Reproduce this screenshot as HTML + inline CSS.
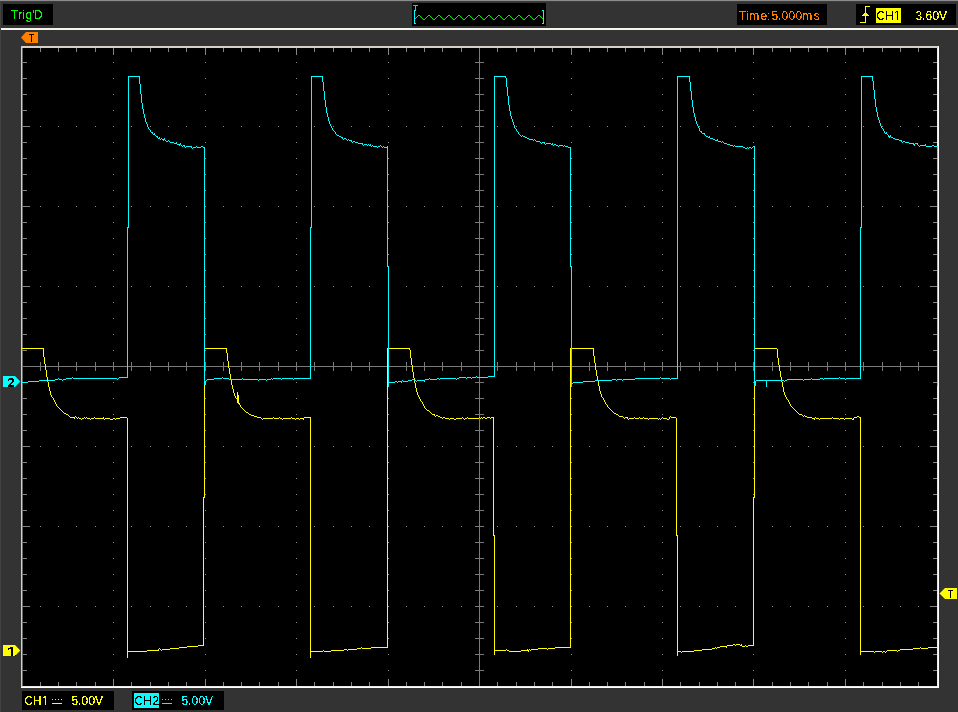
<!DOCTYPE html>
<html><head><meta charset="utf-8"><title>Oscilloscope</title>
<style>
html,body{margin:0;padding:0;}
body{width:958px;height:712px;background:#333333;position:relative;overflow:hidden;font-family:"Liberation Sans",sans-serif;font-size:12px;line-height:14px;}
.box{position:absolute;background:#000;}
.t{position:absolute;white-space:pre;letter-spacing:0;will-change:transform;filter:url(#crisp);}
.plot{position:absolute;left:0;top:0;}
.ov{position:absolute;left:0;top:0;}
.edge-t{position:absolute;left:0;top:0;width:958px;height:1px;background:#8c8c8c;}
.edge-t2{position:absolute;left:0;top:1px;width:958px;height:1px;background:#3c3c3c;}
.edge-l{position:absolute;left:0;top:1px;width:1px;height:711px;background:#424242;}
.sep{position:absolute;left:1px;top:28px;width:957px;height:2px;background:#f6f4ef;}
</style></head><body>
<svg width="0" height="0" style="position:absolute"><defs><filter id="crisp" filterUnits="userSpaceOnUse" x="0" y="0" width="958" height="712" color-interpolation-filters="sRGB"><feComponentTransfer><feFuncA type="discrete" tableValues="0 0 0 0 0 0 0 0 0 1 1 1 1 1 1 1 1 1 1 1"/></feComponentTransfer></filter></defs></svg>
<div class="edge-t"></div><div class="edge-t2"></div><div class="edge-l"></div>
<div class="sep"></div>
<div class="box" style="left:3px;top:4px;width:50px;height:21px;"></div>
<div class="box" style="left:412px;top:3px;width:134px;height:23px;"></div>
<div class="box" style="left:737px;top:4px;width:90px;height:21px;"></div>
<div class="box" style="left:856px;top:4px;width:100px;height:21px;"></div>
<div class="box" style="left:22px;top:691px;width:92px;height:19px;"></div>
<div class="box" style="left:132px;top:691px;width:92px;height:19px;"></div>
<div class="box" style="left:876px;top:8px;width:25px;height:15px;background:#ffff00;"></div>
<div class="box" style="left:134px;top:693px;width:25px;height:15px;background:#00ffff;"></div>
<svg class="plot" width="958" height="712" viewBox="0 0 958 712" shape-rendering="crispEdges">
<rect x="21" y="46" width="918" height="642" fill="#d4d0c8"/>
<rect x="22" y="48" width="1" height="638" fill="#6b6965"/>
<rect x="938" y="46" width="1" height="642" fill="#ffffff"/>
<rect x="21" y="687" width="918" height="1" fill="#ffffff"/>
<rect x="937" y="48" width="1" height="639" fill="#ecebe8"/>
<rect x="23" y="686" width="915" height="1" fill="#ecebe8"/>
<rect x="23" y="48" width="914" height="638" fill="#000"/>
<path d="M23 62.5H27M933 62.5H937M23 78.5H27M933 78.5H937M23 94.5H27M933 94.5H937M23 110.5H27M933 110.5H937M23 126.5H30M930 126.5H937M23 142.5H27M933 142.5H937M23 158.5H27M933 158.5H937M23 174.5H27M933 174.5H937M23 190.5H27M933 190.5H937M23 206.5H30M930 206.5H937M23 222.5H27M933 222.5H937M23 238.5H27M933 238.5H937M23 254.5H27M933 254.5H937M23 270.5H27M933 270.5H937M23 286.5H30M930 286.5H937M23 302.5H27M933 302.5H937M23 318.5H27M933 318.5H937M23 334.5H27M933 334.5H937M23 350.5H27M933 350.5H937M23 366.5H30M930 366.5H937M23 382.5H27M933 382.5H937M23 398.5H27M933 398.5H937M23 414.5H27M933 414.5H937M23 430.5H27M933 430.5H937M23 446.5H30M930 446.5H937M23 462.5H27M933 462.5H937M23 478.5H27M933 478.5H937M23 494.5H27M933 494.5H937M23 510.5H27M933 510.5H937M23 526.5H30M930 526.5H937M23 542.5H27M933 542.5H937M23 558.5H27M933 558.5H937M23 574.5H27M933 574.5H937M23 590.5H27M933 590.5H937M23 606.5H30M930 606.5H937M23 622.5H27M933 622.5H937M23 638.5H27M933 638.5H937M23 654.5H27M933 654.5H937M23 670.5H27M933 670.5H937M40.5 48V52M40.5 682V686M58.5 48V52M58.5 682V686M76.5 48V52M76.5 682V686M95.5 48V52M95.5 682V686M113.5 48V55M113.5 679V686M131.5 48V52M131.5 682V686M150.5 48V52M150.5 682V686M168.5 48V52M168.5 682V686M186.5 48V52M186.5 682V686M205.5 48V55M205.5 679V686M223.5 48V52M223.5 682V686M241.5 48V52M241.5 682V686M259.5 48V52M259.5 682V686M278.5 48V52M278.5 682V686M296.5 48V55M296.5 679V686M314.5 48V52M314.5 682V686M333.5 48V52M333.5 682V686M351.5 48V52M351.5 682V686M369.5 48V52M369.5 682V686M388.5 48V55M388.5 679V686M406.5 48V52M406.5 682V686M424.5 48V52M424.5 682V686M442.5 48V52M442.5 682V686M461.5 48V52M461.5 682V686M479.5 48V55M479.5 679V686M497.5 48V52M497.5 682V686M516.5 48V52M516.5 682V686M534.5 48V52M534.5 682V686M552.5 48V52M552.5 682V686M571.5 48V55M571.5 679V686M589.5 48V52M589.5 682V686M607.5 48V52M607.5 682V686M625.5 48V52M625.5 682V686M644.5 48V52M644.5 682V686M662.5 48V55M662.5 679V686M680.5 48V52M680.5 682V686M699.5 48V52M699.5 682V686M717.5 48V52M717.5 682V686M735.5 48V52M735.5 682V686M753.5 48V55M753.5 679V686M772.5 48V52M772.5 682V686M790.5 48V52M790.5 682V686M808.5 48V52M808.5 682V686M827.5 48V52M827.5 682V686M845.5 48V55M845.5 679V686M863.5 48V52M863.5 682V686M882.5 48V52M882.5 682V686M900.5 48V52M900.5 682V686M918.5 48V52M918.5 682V686" stroke="#858585" stroke-width="1" fill="none"/>
<path d="M40 126.5h1M58 126.5h1M76 126.5h1M95 126.5h1M113 126.5h1M131 126.5h1M150 126.5h1M168 126.5h1M186 126.5h1M205 126.5h1M223 126.5h1M241 126.5h1M259 126.5h1M278 126.5h1M296 126.5h1M314 126.5h1M333 126.5h1M351 126.5h1M369 126.5h1M388 126.5h1M406 126.5h1M424 126.5h1M442 126.5h1M461 126.5h1M479 126.5h1M497 126.5h1M516 126.5h1M534 126.5h1M552 126.5h1M571 126.5h1M589 126.5h1M607 126.5h1M625 126.5h1M644 126.5h1M662 126.5h1M680 126.5h1M699 126.5h1M717 126.5h1M735 126.5h1M753 126.5h1M772 126.5h1M790 126.5h1M808 126.5h1M827 126.5h1M845 126.5h1M863 126.5h1M882 126.5h1M900 126.5h1M918 126.5h1M40 206.5h1M58 206.5h1M76 206.5h1M95 206.5h1M113 206.5h1M131 206.5h1M150 206.5h1M168 206.5h1M186 206.5h1M205 206.5h1M223 206.5h1M241 206.5h1M259 206.5h1M278 206.5h1M296 206.5h1M314 206.5h1M333 206.5h1M351 206.5h1M369 206.5h1M388 206.5h1M406 206.5h1M424 206.5h1M442 206.5h1M461 206.5h1M479 206.5h1M497 206.5h1M516 206.5h1M534 206.5h1M552 206.5h1M571 206.5h1M589 206.5h1M607 206.5h1M625 206.5h1M644 206.5h1M662 206.5h1M680 206.5h1M699 206.5h1M717 206.5h1M735 206.5h1M753 206.5h1M772 206.5h1M790 206.5h1M808 206.5h1M827 206.5h1M845 206.5h1M863 206.5h1M882 206.5h1M900 206.5h1M918 206.5h1M40 286.5h1M58 286.5h1M76 286.5h1M95 286.5h1M113 286.5h1M131 286.5h1M150 286.5h1M168 286.5h1M186 286.5h1M205 286.5h1M223 286.5h1M241 286.5h1M259 286.5h1M278 286.5h1M296 286.5h1M314 286.5h1M333 286.5h1M351 286.5h1M369 286.5h1M388 286.5h1M406 286.5h1M424 286.5h1M442 286.5h1M461 286.5h1M479 286.5h1M497 286.5h1M516 286.5h1M534 286.5h1M552 286.5h1M571 286.5h1M589 286.5h1M607 286.5h1M625 286.5h1M644 286.5h1M662 286.5h1M680 286.5h1M699 286.5h1M717 286.5h1M735 286.5h1M753 286.5h1M772 286.5h1M790 286.5h1M808 286.5h1M827 286.5h1M845 286.5h1M863 286.5h1M882 286.5h1M900 286.5h1M918 286.5h1M40 446.5h1M58 446.5h1M76 446.5h1M95 446.5h1M113 446.5h1M131 446.5h1M150 446.5h1M168 446.5h1M186 446.5h1M205 446.5h1M223 446.5h1M241 446.5h1M259 446.5h1M278 446.5h1M296 446.5h1M314 446.5h1M333 446.5h1M351 446.5h1M369 446.5h1M388 446.5h1M406 446.5h1M424 446.5h1M442 446.5h1M461 446.5h1M479 446.5h1M497 446.5h1M516 446.5h1M534 446.5h1M552 446.5h1M571 446.5h1M589 446.5h1M607 446.5h1M625 446.5h1M644 446.5h1M662 446.5h1M680 446.5h1M699 446.5h1M717 446.5h1M735 446.5h1M753 446.5h1M772 446.5h1M790 446.5h1M808 446.5h1M827 446.5h1M845 446.5h1M863 446.5h1M882 446.5h1M900 446.5h1M918 446.5h1M40 526.5h1M58 526.5h1M76 526.5h1M95 526.5h1M113 526.5h1M131 526.5h1M150 526.5h1M168 526.5h1M186 526.5h1M205 526.5h1M223 526.5h1M241 526.5h1M259 526.5h1M278 526.5h1M296 526.5h1M314 526.5h1M333 526.5h1M351 526.5h1M369 526.5h1M388 526.5h1M406 526.5h1M424 526.5h1M442 526.5h1M461 526.5h1M479 526.5h1M497 526.5h1M516 526.5h1M534 526.5h1M552 526.5h1M571 526.5h1M589 526.5h1M607 526.5h1M625 526.5h1M644 526.5h1M662 526.5h1M680 526.5h1M699 526.5h1M717 526.5h1M735 526.5h1M753 526.5h1M772 526.5h1M790 526.5h1M808 526.5h1M827 526.5h1M845 526.5h1M863 526.5h1M882 526.5h1M900 526.5h1M918 526.5h1M40 606.5h1M58 606.5h1M76 606.5h1M95 606.5h1M113 606.5h1M131 606.5h1M150 606.5h1M168 606.5h1M186 606.5h1M205 606.5h1M223 606.5h1M241 606.5h1M259 606.5h1M278 606.5h1M296 606.5h1M314 606.5h1M333 606.5h1M351 606.5h1M369 606.5h1M388 606.5h1M406 606.5h1M424 606.5h1M442 606.5h1M461 606.5h1M479 606.5h1M497 606.5h1M516 606.5h1M534 606.5h1M552 606.5h1M571 606.5h1M589 606.5h1M607 606.5h1M625 606.5h1M644 606.5h1M662 606.5h1M680 606.5h1M699 606.5h1M717 606.5h1M735 606.5h1M753 606.5h1M772 606.5h1M790 606.5h1M808 606.5h1M827 606.5h1M845 606.5h1M863 606.5h1M882 606.5h1M900 606.5h1M918 606.5h1M113 62.5h1M113 78.5h1M113 94.5h1M113 110.5h1M113 142.5h1M113 158.5h1M113 174.5h1M113 190.5h1M113 222.5h1M113 238.5h1M113 254.5h1M113 270.5h1M113 302.5h1M113 318.5h1M113 334.5h1M113 350.5h1M113 382.5h1M113 398.5h1M113 414.5h1M113 430.5h1M113 462.5h1M113 478.5h1M113 494.5h1M113 510.5h1M113 542.5h1M113 558.5h1M113 574.5h1M113 590.5h1M113 622.5h1M113 638.5h1M113 654.5h1M113 670.5h1M205 62.5h1M205 78.5h1M205 94.5h1M205 110.5h1M205 142.5h1M205 158.5h1M205 174.5h1M205 190.5h1M205 222.5h1M205 238.5h1M205 254.5h1M205 270.5h1M205 302.5h1M205 318.5h1M205 334.5h1M205 350.5h1M205 382.5h1M205 398.5h1M205 414.5h1M205 430.5h1M205 462.5h1M205 478.5h1M205 494.5h1M205 510.5h1M205 542.5h1M205 558.5h1M205 574.5h1M205 590.5h1M205 622.5h1M205 638.5h1M205 654.5h1M205 670.5h1M296 62.5h1M296 78.5h1M296 94.5h1M296 110.5h1M296 142.5h1M296 158.5h1M296 174.5h1M296 190.5h1M296 222.5h1M296 238.5h1M296 254.5h1M296 270.5h1M296 302.5h1M296 318.5h1M296 334.5h1M296 350.5h1M296 382.5h1M296 398.5h1M296 414.5h1M296 430.5h1M296 462.5h1M296 478.5h1M296 494.5h1M296 510.5h1M296 542.5h1M296 558.5h1M296 574.5h1M296 590.5h1M296 622.5h1M296 638.5h1M296 654.5h1M296 670.5h1M388 62.5h1M388 78.5h1M388 94.5h1M388 110.5h1M388 142.5h1M388 158.5h1M388 174.5h1M388 190.5h1M388 222.5h1M388 238.5h1M388 254.5h1M388 270.5h1M388 302.5h1M388 318.5h1M388 334.5h1M388 350.5h1M388 382.5h1M388 398.5h1M388 414.5h1M388 430.5h1M388 462.5h1M388 478.5h1M388 494.5h1M388 510.5h1M388 542.5h1M388 558.5h1M388 574.5h1M388 590.5h1M388 622.5h1M388 638.5h1M388 654.5h1M388 670.5h1M571 62.5h1M571 78.5h1M571 94.5h1M571 110.5h1M571 142.5h1M571 158.5h1M571 174.5h1M571 190.5h1M571 222.5h1M571 238.5h1M571 254.5h1M571 270.5h1M571 302.5h1M571 318.5h1M571 334.5h1M571 350.5h1M571 382.5h1M571 398.5h1M571 414.5h1M571 430.5h1M571 462.5h1M571 478.5h1M571 494.5h1M571 510.5h1M571 542.5h1M571 558.5h1M571 574.5h1M571 590.5h1M571 622.5h1M571 638.5h1M571 654.5h1M571 670.5h1M662 62.5h1M662 78.5h1M662 94.5h1M662 110.5h1M662 142.5h1M662 158.5h1M662 174.5h1M662 190.5h1M662 222.5h1M662 238.5h1M662 254.5h1M662 270.5h1M662 302.5h1M662 318.5h1M662 334.5h1M662 350.5h1M662 382.5h1M662 398.5h1M662 414.5h1M662 430.5h1M662 462.5h1M662 478.5h1M662 494.5h1M662 510.5h1M662 542.5h1M662 558.5h1M662 574.5h1M662 590.5h1M662 622.5h1M662 638.5h1M662 654.5h1M662 670.5h1M753 62.5h1M753 78.5h1M753 94.5h1M753 110.5h1M753 142.5h1M753 158.5h1M753 174.5h1M753 190.5h1M753 222.5h1M753 238.5h1M753 254.5h1M753 270.5h1M753 302.5h1M753 318.5h1M753 334.5h1M753 350.5h1M753 382.5h1M753 398.5h1M753 414.5h1M753 430.5h1M753 462.5h1M753 478.5h1M753 494.5h1M753 510.5h1M753 542.5h1M753 558.5h1M753 574.5h1M753 590.5h1M753 622.5h1M753 638.5h1M753 654.5h1M753 670.5h1M845 62.5h1M845 78.5h1M845 94.5h1M845 110.5h1M845 142.5h1M845 158.5h1M845 174.5h1M845 190.5h1M845 222.5h1M845 238.5h1M845 254.5h1M845 270.5h1M845 302.5h1M845 318.5h1M845 334.5h1M845 350.5h1M845 382.5h1M845 398.5h1M845 414.5h1M845 430.5h1M845 462.5h1M845 478.5h1M845 494.5h1M845 510.5h1M845 542.5h1M845 558.5h1M845 574.5h1M845 590.5h1M845 622.5h1M845 638.5h1M845 654.5h1M845 670.5h1" stroke="#8a8a8a" stroke-width="1" fill="none"/>
<path d="M23 366.5H937M475 62.5H484M475 78.5H484M475 94.5H484M475 110.5H484M475 126.5H484M475 142.5H484M475 158.5H484M475 174.5H484M475 190.5H484M475 206.5H484M475 222.5H484M475 238.5H484M475 254.5H484M475 270.5H484M475 286.5H484M475 302.5H484M475 318.5H484M475 334.5H484M475 350.5H484M475 382.5H484M475 398.5H484M475 414.5H484M475 430.5H484M475 446.5H484M475 462.5H484M475 478.5H484M475 494.5H484M475 510.5H484M475 526.5H484M475 542.5H484M475 558.5H484M475 574.5H484M475 590.5H484M475 606.5H484M475 622.5H484M475 638.5H484M475 654.5H484M475 670.5H484M479.5 48V686M40.5 362V371M58.5 362V371M76.5 362V371M95.5 362V371M113.5 362V371M131.5 362V371M150.5 362V371M168.5 362V371M186.5 362V371M205.5 362V371M223.5 362V371M241.5 362V371M259.5 362V371M278.5 362V371M296.5 362V371M314.5 362V371M333.5 362V371M351.5 362V371M369.5 362V371M388.5 362V371M406.5 362V371M424.5 362V371M442.5 362V371M461.5 362V371M497.5 362V371M516.5 362V371M534.5 362V371M552.5 362V371M571.5 362V371M589.5 362V371M607.5 362V371M625.5 362V371M644.5 362V371M662.5 362V371M680.5 362V371M699.5 362V371M717.5 362V371M735.5 362V371M753.5 362V371M772.5 362V371M790.5 362V371M808.5 362V371M827.5 362V371M845.5 362V371M863.5 362V371M882.5 362V371M900.5 362V371M918.5 362V371" stroke="#7a7a7a" stroke-width="1" fill="none"/>
<path d="M22.5 348V349M23.5 348V349M24.5 348V349M25.5 348V349M26.5 348V349M27.5 348V349M28.5 348V349M29.5 348V349M30.5 348V349M31.5 348V349M32.5 348V349M33.5 348V349M34.5 348V349M35.5 348V349M36.5 348V349M37.5 348V349M38.5 348V349M39.5 348V349M40.5 348V349M41.5 348V349M42.5 348V349M43.5 348V357M44.5 357V364M45.5 364V370M46.5 370V377M47.5 377V382M48.5 382V387M49.5 387V391M50.5 391V395M51.5 395V397M52.5 397V398M53.5 398V400M54.5 400V402M55.5 402V404M56.5 404V406M57.5 406V407M58.5 407V408M59.5 408V409M60.5 409V410M61.5 410V411M62.5 411V412M63.5 412V413M64.5 413V414M65.5 413V414M66.5 414V415M67.5 414V415M68.5 415V416M69.5 416V417M70.5 417V418M71.5 417V418M72.5 417V418M73.5 417V418M74.5 417V419M75.5 416V417M76.5 417V418M77.5 418V419M78.5 417V418M79.5 418V419M80.5 418V419M81.5 419V420M82.5 418V419M83.5 418V419M84.5 417V418M85.5 418V419M86.5 417V418M87.5 418V419M88.5 418V419M89.5 418V419M90.5 419V420M91.5 418V419M92.5 418V419M93.5 418V419M94.5 417V418M95.5 418V419M96.5 418V419M97.5 418V419M98.5 418V419M99.5 418V419M100.5 418V419M101.5 418V419M102.5 418V419M103.5 417V419M104.5 419V420M105.5 418V419M106.5 418V419M107.5 418V419M108.5 418V419M109.5 418V419M110.5 419V420M111.5 419V420M112.5 419V420M113.5 418V419M114.5 418V419M115.5 419V420M116.5 418V419M117.5 418V419M118.5 418V419M119.5 418V419M120.5 417V418M121.5 417V418M122.5 417V418M123.5 417V418M124.5 417V418M125.5 417V418M126.5 417V418M127.5 418V652M128.5 651V652M129.5 651V652M130.5 651V652M131.5 651V652M132.5 651V652M133.5 651V652M134.5 651V652M135.5 651V652M136.5 651V652M137.5 651V652M138.5 651V652M139.5 651V652M140.5 651V652M141.5 651V652M142.5 651V652M143.5 651V652M144.5 651V652M145.5 651V652M146.5 651V652M147.5 650V651M148.5 650V651M149.5 650V651M150.5 650V651M151.5 650V651M152.5 650V651M153.5 650V651M154.5 650V651M155.5 650V651M156.5 650V651M157.5 650V651M158.5 649V651M159.5 648V649M160.5 649V650M161.5 650V651M162.5 649V650M163.5 649V650M164.5 649V650M165.5 649V650M166.5 649V650M167.5 649V650M168.5 649V650M169.5 649V650M170.5 648V649M171.5 648V649M172.5 648V649M173.5 648V649M174.5 648V649M175.5 648V649M176.5 648V649M177.5 648V649M178.5 648V649M179.5 647V648M180.5 647V648M181.5 647V648M182.5 647V648M183.5 647V648M184.5 647V648M185.5 647V648M186.5 647V648M187.5 646V647M188.5 646V647M189.5 646V647M190.5 646V647M191.5 646V647M192.5 646V647M193.5 646V647M194.5 646V647M195.5 646V647M196.5 646V647M197.5 646V647M198.5 645V646M199.5 645V646M200.5 645V646M201.5 645V646M202.5 645V646M203.5 497V646M204.5 348V498M205.5 348V349M206.5 348V349M207.5 348V349M208.5 348V349M209.5 348V349M210.5 348V349M211.5 348V349M212.5 348V349M213.5 348V349M214.5 348V349M215.5 348V349M216.5 348V349M217.5 348V349M218.5 348V349M219.5 348V349M220.5 348V349M221.5 348V349M222.5 348V349M223.5 348V349M224.5 348V349M225.5 348V349M226.5 348V353M227.5 353V361M228.5 361V368M229.5 368V374M230.5 374V380M231.5 380V385M232.5 385V389M233.5 389V393M234.5 393V396M235.5 396V398M236.5 398V399M237.5 399V401M238.5 401V403M239.5 403V405M240.5 405V407M241.5 407V408M242.5 408V409M243.5 409V410M244.5 410V411M245.5 411V412M246.5 412V413M247.5 412V413M248.5 413V414M249.5 414V415M250.5 414V415M251.5 415V416M252.5 415V416M253.5 415V416M254.5 416V417M255.5 416V417M256.5 416V417M257.5 417V418M258.5 417V418M259.5 417V418M260.5 417V418M261.5 418V419M262.5 419V420M263.5 418V419M264.5 418V419M265.5 418V419M266.5 418V419M267.5 418V419M268.5 418V419M269.5 418V419M270.5 418V419M271.5 418V419M272.5 418V419M273.5 417V418M274.5 418V419M275.5 418V419M276.5 418V419M277.5 418V419M278.5 418V419M279.5 417V418M280.5 418V419M281.5 418V419M282.5 419V420M283.5 418V419M284.5 418V419M285.5 418V419M286.5 418V419M287.5 418V419M288.5 418V419M289.5 418V419M290.5 418V419M291.5 417V418M292.5 418V419M293.5 418V419M294.5 418V419M295.5 419V420M296.5 418V419M297.5 418V419M298.5 418V419M299.5 419V420M300.5 418V419M301.5 418V419M302.5 418V419M303.5 418V420M304.5 417V418M305.5 417V418M306.5 417V418M307.5 417V418M308.5 417V418M309.5 417V418M310.5 417V652M311.5 651V652M312.5 651V652M313.5 651V652M314.5 651V652M315.5 651V652M316.5 651V652M317.5 651V652M318.5 651V652M319.5 651V652M320.5 651V652M321.5 651V652M322.5 651V652M323.5 650V651M324.5 651V652M325.5 651V652M326.5 651V652M327.5 651V652M328.5 651V652M329.5 651V652M330.5 651V652M331.5 650V651M332.5 650V651M333.5 650V651M334.5 650V651M335.5 650V651M336.5 650V651M337.5 650V651M338.5 650V651M339.5 650V651M340.5 650V651M341.5 650V651M342.5 650V651M343.5 650V651M344.5 649V650M345.5 649V650M346.5 649V650M347.5 650V651M348.5 649V650M349.5 649V650M350.5 649V650M351.5 649V650M352.5 649V650M353.5 649V650M354.5 649V650M355.5 649V650M356.5 649V650M357.5 648V649M358.5 648V649M359.5 648V649M360.5 648V649M361.5 647V648M362.5 648V649M363.5 648V649M364.5 648V649M365.5 648V649M366.5 648V649M367.5 648V649M368.5 648V649M369.5 648V649M370.5 648V649M371.5 647V648M372.5 647V648M373.5 647V648M374.5 647V648M375.5 647V648M376.5 647V648M377.5 647V648M378.5 647V648M379.5 647V648M380.5 647V648M381.5 647V648M382.5 647V648M383.5 647V648M384.5 647V648M385.5 647V648M386.5 647V648M387.5 348V648M388.5 348V349M389.5 348V349M390.5 348V349M391.5 348V349M392.5 348V349M393.5 348V349M394.5 348V349M395.5 348V349M396.5 348V349M397.5 348V349M398.5 348V349M399.5 348V349M400.5 348V349M401.5 348V349M402.5 348V349M403.5 348V349M404.5 348V349M405.5 348V349M406.5 348V349M407.5 348V349M408.5 348V349M409.5 348V350M410.5 350V358M411.5 358V365M412.5 365V372M413.5 372V378M414.5 378V383M415.5 383V388M416.5 388V392M417.5 392V395M418.5 395V397M419.5 397V399M420.5 399V401M421.5 401V402M422.5 402V404M423.5 404V406M424.5 406V408M425.5 408V409M426.5 409V410M427.5 410V411M428.5 410V411M429.5 411V412M430.5 412V413M431.5 413V414M432.5 414V415M433.5 414V415M434.5 414V416M435.5 416V417M436.5 415V416M437.5 415V416M438.5 416V417M439.5 416V417M440.5 417V418M441.5 417V418M442.5 418V419M443.5 417V418M444.5 417V418M445.5 418V419M446.5 418V419M447.5 418V419M448.5 418V419M449.5 419V420M450.5 418V419M451.5 418V419M452.5 418V419M453.5 418V419M454.5 419V420M455.5 419V420M456.5 418V419M457.5 418V419M458.5 418V419M459.5 418V419M460.5 418V419M461.5 418V419M462.5 417V418M463.5 418V419M464.5 419V420M465.5 418V419M466.5 418V419M467.5 417V418M468.5 418V419M469.5 418V419M470.5 418V419M471.5 418V419M472.5 418V419M473.5 418V419M474.5 418V419M475.5 418V419M476.5 418V419M477.5 418V419M478.5 418V419M479.5 417V418M480.5 418V419M481.5 417V418M482.5 418V419M483.5 417V418M484.5 417V418M485.5 418V419M486.5 418V419M487.5 417V418M488.5 417V418M489.5 417V418M490.5 418V419M491.5 417V418M492.5 417V418M493.5 417V536M494.5 535V651M495.5 650V651M496.5 650V651M497.5 650V651M498.5 650V651M499.5 650V651M500.5 650V651M501.5 650V651M502.5 650V651M503.5 650V651M504.5 650V651M505.5 650V651M506.5 649V650M507.5 650V651M508.5 650V651M509.5 651V652M510.5 651V652M511.5 651V652M512.5 651V652M513.5 651V652M514.5 651V652M515.5 651V652M516.5 651V652M517.5 651V652M518.5 651V652M519.5 651V652M520.5 651V652M521.5 650V651M522.5 650V651M523.5 650V651M524.5 650V651M525.5 650V651M526.5 650V651M527.5 649V651M528.5 650V652M529.5 649V650M530.5 650V651M531.5 649V650M532.5 649V650M533.5 649V650M534.5 649V650M535.5 649V650M536.5 649V650M537.5 649V650M538.5 648V649M539.5 648V649M540.5 648V649M541.5 648V649M542.5 648V649M543.5 648V649M544.5 648V649M545.5 648V649M546.5 648V649M547.5 649V650M548.5 648V649M549.5 648V649M550.5 648V649M551.5 648V649M552.5 648V649M553.5 648V649M554.5 648V649M555.5 647V648M556.5 647V648M557.5 647V648M558.5 647V648M559.5 647V648M560.5 647V648M561.5 647V648M562.5 647V648M563.5 647V648M564.5 647V648M565.5 647V648M566.5 647V648M567.5 647V648M568.5 647V648M569.5 647V648M570.5 348V648M571.5 348V349M572.5 348V349M573.5 348V349M574.5 348V349M575.5 348V349M576.5 348V349M577.5 348V349M578.5 348V349M579.5 348V349M580.5 348V349M581.5 348V349M582.5 348V349M583.5 348V349M584.5 348V349M585.5 348V349M586.5 348V349M587.5 348V349M588.5 348V349M589.5 348V349M590.5 348V349M591.5 348V349M592.5 348V349M593.5 348V356M594.5 356V363M595.5 363V370M596.5 370V376M597.5 376V381M598.5 381V386M599.5 386V391M600.5 391V394M601.5 394V397M602.5 397V398M603.5 398V400M604.5 400V402M605.5 402V404M606.5 404V405M607.5 405V407M608.5 407V408M609.5 408V409M610.5 409V410M611.5 410V411M612.5 411V412M613.5 412V413M614.5 413V414M615.5 413V414M616.5 414V415M617.5 414V415M618.5 415V416M619.5 416V417M620.5 416V417M621.5 416V417M622.5 416V417M623.5 417V418M624.5 418V419M625.5 417V418M626.5 417V418M627.5 417V419M628.5 419V420M629.5 418V419M630.5 418V419M631.5 418V419M632.5 418V419M633.5 418V419M634.5 417V418M635.5 418V419M636.5 418V419M637.5 418V419M638.5 418V419M639.5 417V418M640.5 418V419M641.5 418V419M642.5 418V419M643.5 417V418M644.5 418V419M645.5 418V419M646.5 418V419M647.5 418V419M648.5 419V420M649.5 418V419M650.5 418V419M651.5 418V419M652.5 418V419M653.5 418V419M654.5 418V419M655.5 418V419M656.5 418V419M657.5 418V419M658.5 419V420M659.5 418V419M660.5 419V420M661.5 418V419M662.5 417V418M663.5 418V419M664.5 418V419M665.5 418V419M666.5 418V419M667.5 419V420M668.5 419V420M669.5 417V419M670.5 416V417M671.5 417V418M672.5 417V418M673.5 417V418M674.5 417V418M675.5 417V418M676.5 418V536M677.5 535V652M678.5 651V652M679.5 651V652M680.5 651V652M681.5 652V653M682.5 651V652M683.5 651V652M684.5 651V652M685.5 651V652M686.5 651V652M687.5 651V652M688.5 651V652M689.5 651V652M690.5 651V652M691.5 651V652M692.5 651V652M693.5 651V652M694.5 650V651M695.5 650V651M696.5 650V651M697.5 650V651M698.5 650V651M699.5 650V651M700.5 650V651M701.5 650V651M702.5 649V650M703.5 649V650M704.5 649V650M705.5 649V650M706.5 649V650M707.5 649V650M708.5 649V650M709.5 649V650M710.5 649V650M711.5 649V650M712.5 648V649M713.5 648V649M714.5 648V649M715.5 647V648M716.5 648V649M717.5 647V648M718.5 647V648M719.5 647V648M720.5 646V647M721.5 646V647M722.5 646V647M723.5 646V647M724.5 646V647M725.5 646V647M726.5 646V648M727.5 645V646M728.5 645V646M729.5 645V646M730.5 645V646M731.5 645V646M732.5 645V646M733.5 644V645M734.5 644V645M735.5 645V646M736.5 644V645M737.5 644V645M738.5 644V645M739.5 644V645M740.5 645V646M741.5 644V646M742.5 646V647M743.5 646V647M744.5 646V647M745.5 645V646M746.5 646V647M747.5 646V647M748.5 645V646M749.5 645V646M750.5 645V646M751.5 645V646M752.5 645V646M753.5 497V646M754.5 348V498M755.5 348V349M756.5 348V349M757.5 348V349M758.5 348V349M759.5 348V349M760.5 348V349M761.5 348V349M762.5 348V349M763.5 348V349M764.5 348V349M765.5 348V349M766.5 348V349M767.5 348V349M768.5 348V349M769.5 348V349M770.5 348V349M771.5 348V349M772.5 348V349M773.5 348V349M774.5 348V349M775.5 348V349M776.5 348V349M777.5 349V358M778.5 358V365M779.5 365V371M780.5 371V377M781.5 377V382M782.5 382V387M783.5 387V392M784.5 392V395M785.5 395V397M786.5 397V399M787.5 399V400M788.5 400V402M789.5 402V404M790.5 404V406M791.5 406V407M792.5 407V408M793.5 408V409M794.5 409V410M795.5 410V411M796.5 411V412M797.5 412V413M798.5 413V414M799.5 414V415M800.5 414V415M801.5 414V415M802.5 415V416M803.5 416V417M804.5 415V416M805.5 416V417M806.5 416V417M807.5 417V418M808.5 417V418M809.5 417V418M810.5 417V418M811.5 417V418M812.5 418V419M813.5 418V419M814.5 418V420M815.5 417V418M816.5 418V419M817.5 418V419M818.5 418V419M819.5 419V420M820.5 418V419M821.5 418V419M822.5 418V419M823.5 418V419M824.5 418V419M825.5 418V419M826.5 418V419M827.5 418V419M828.5 418V419M829.5 418V419M830.5 418V419M831.5 418V419M832.5 417V418M833.5 418V419M834.5 418V419M835.5 418V419M836.5 418V419M837.5 418V419M838.5 418V419M839.5 419V420M840.5 418V419M841.5 418V419M842.5 418V419M843.5 418V419M844.5 419V420M845.5 418V419M846.5 418V419M847.5 418V419M848.5 418V419M849.5 418V419M850.5 418V419M851.5 418V419M852.5 419V420M853.5 418V420M854.5 417V418M855.5 417V418M856.5 417V418M857.5 416V417M858.5 416V417M859.5 417V418M860.5 417V652M861.5 651V652M862.5 651V652M863.5 651V652M864.5 651V652M865.5 651V652M866.5 651V652M867.5 651V652M868.5 651V652M869.5 651V652M870.5 651V652M871.5 651V652M872.5 651V652M873.5 651V652M874.5 652V653M875.5 651V652M876.5 651V652M877.5 651V652M878.5 651V652M879.5 651V652M880.5 651V652M881.5 651V652M882.5 652V653M883.5 651V652M884.5 651V652M885.5 652V653M886.5 651V652M887.5 650V651M888.5 650V651M889.5 650V651M890.5 650V651M891.5 650V651M892.5 650V651M893.5 650V651M894.5 650V651M895.5 650V651M896.5 650V651M897.5 651V652M898.5 650V651M899.5 650V651M900.5 649V650M901.5 649V650M902.5 649V650M903.5 649V650M904.5 649V650M905.5 649V650M906.5 649V650M907.5 649V650M908.5 649V650M909.5 649V650M910.5 649V650M911.5 649V650M912.5 649V650M913.5 648V649M914.5 648V649M915.5 648V649M916.5 648V649M917.5 648V649M918.5 648V649M919.5 648V649M920.5 647V648M921.5 648V649M922.5 648V649M923.5 648V649M924.5 648V649M925.5 648V649M926.5 648V649M927.5 648V649M928.5 647V648M929.5 647V648M930.5 647V648M931.5 647V648M932.5 647V648M933.5 647V648M934.5 647V648M935.5 647V648M936.5 647V648M937.5 386V648M127.5 418V658M310.5 417V658M494.5 535V655M677.5 535V656M860.5 417V655M237.5 392V403M238.5 395V404" stroke="#ffff00" stroke-width="1" fill="none"/>
<path d="M22.5 382V383M23.5 382V383M24.5 382V383M25.5 382V383M26.5 382V383M27.5 382V383M28.5 381V382M29.5 381V382M30.5 381V382M31.5 381V382M32.5 381V382M33.5 381V382M34.5 381V382M35.5 381V382M36.5 381V382M37.5 381V382M38.5 381V382M39.5 380V381M40.5 380V381M41.5 380V381M42.5 380V381M43.5 380V381M44.5 380V381M45.5 380V381M46.5 380V381M47.5 381V382M48.5 380V381M49.5 380V381M50.5 380V381M51.5 380V381M52.5 380V381M53.5 380V381M54.5 380V381M55.5 379V380M56.5 379V380M57.5 379V380M58.5 378V379M59.5 379V380M60.5 379V380M61.5 379V380M62.5 380V381M63.5 379V380M64.5 379V380M65.5 379V380M66.5 378V379M67.5 378V379M68.5 378V379M69.5 378V379M70.5 378V379M71.5 378V379M72.5 377V378M73.5 378V379M74.5 378V379M75.5 378V379M76.5 378V379M77.5 378V379M78.5 378V379M79.5 378V379M80.5 378V379M81.5 378V379M82.5 378V379M83.5 378V379M84.5 378V379M85.5 378V379M86.5 378V379M87.5 378V379M88.5 378V379M89.5 378V379M90.5 378V379M91.5 378V379M92.5 378V379M93.5 378V379M94.5 378V379M95.5 378V379M96.5 378V379M97.5 378V379M98.5 378V379M99.5 378V379M100.5 378V379M101.5 378V379M102.5 378V379M103.5 378V379M104.5 378V379M105.5 378V379M106.5 378V379M107.5 378V379M108.5 378V379M109.5 378V379M110.5 378V379M111.5 378V379M112.5 378V379M113.5 378V379M114.5 378V379M115.5 378V379M116.5 378V379M117.5 379V380M118.5 378V379M119.5 377V378M120.5 377V378M121.5 377V378M122.5 377V378M123.5 377V378M124.5 377V378M125.5 377V378M126.5 377V378M127.5 227V378M128.5 76V228M129.5 76V77M130.5 76V77M131.5 76V77M132.5 76V77M133.5 76V77M134.5 76V77M135.5 76V77M136.5 76V77M137.5 76V77M138.5 76V77M139.5 76V84M140.5 84V94M141.5 94V103M142.5 103V109M143.5 109V114M144.5 114V118M145.5 118V122M146.5 122V124M147.5 124V127M148.5 127V129M149.5 129V130M150.5 130V132M151.5 132V133M152.5 132V134M153.5 134V135M154.5 133V135M155.5 135V136M156.5 136V137M157.5 136V138M158.5 138V139M159.5 137V139M160.5 139V140M161.5 138V139M162.5 139V140M163.5 139V141M164.5 138V140M165.5 140V141M166.5 141V142M167.5 141V142M168.5 140V141M169.5 141V142M170.5 142V143M171.5 142V143M172.5 142V143M173.5 142V143M174.5 143V144M175.5 143V144M176.5 142V144M177.5 144V145M178.5 144V145M179.5 144V146M180.5 143V145M181.5 145V146M182.5 146V147M183.5 145V146M184.5 145V147M185.5 147V148M186.5 146V147M187.5 146V147M188.5 146V147M189.5 146V147M190.5 146V147M191.5 146V148M192.5 148V149M193.5 147V148M194.5 147V148M195.5 147V148M196.5 146V147M197.5 147V148M198.5 147V148M199.5 147V148M200.5 147V148M201.5 146V147M202.5 146V147M203.5 147V148M204.5 147V385M205.5 381V385M206.5 380V381M207.5 379V380M208.5 379V380M209.5 379V380M210.5 379V380M211.5 379V380M212.5 379V380M213.5 379V380M214.5 378V379M215.5 378V379M216.5 378V379M217.5 378V379M218.5 378V379M219.5 378V379M220.5 378V379M221.5 378V379M222.5 377V378M223.5 378V379M224.5 378V379M225.5 378V379M226.5 378V379M227.5 378V379M228.5 378V379M229.5 379V380M230.5 379V380M231.5 379V380M232.5 379V380M233.5 379V380M234.5 379V380M235.5 379V380M236.5 379V380M237.5 379V380M238.5 379V380M239.5 379V380M240.5 379V380M241.5 379V380M242.5 378V379M243.5 379V380M244.5 379V380M245.5 379V380M246.5 379V380M247.5 379V380M248.5 379V380M249.5 379V380M250.5 379V380M251.5 379V380M252.5 379V380M253.5 379V380M254.5 379V380M255.5 379V380M256.5 379V380M257.5 379V380M258.5 380V381M259.5 379V380M260.5 379V380M261.5 379V380M262.5 379V380M263.5 379V380M264.5 379V380M265.5 379V380M266.5 380V381M267.5 379V380M268.5 379V380M269.5 379V380M270.5 379V380M271.5 378V379M272.5 379V380M273.5 378V379M274.5 378V379M275.5 378V379M276.5 378V379M277.5 378V379M278.5 378V379M279.5 378V379M280.5 378V379M281.5 379V380M282.5 378V379M283.5 378V379M284.5 378V379M285.5 378V379M286.5 378V379M287.5 378V379M288.5 378V379M289.5 378V379M290.5 378V379M291.5 378V379M292.5 378V379M293.5 379V380M294.5 378V379M295.5 378V379M296.5 378V379M297.5 378V379M298.5 378V379M299.5 378V379M300.5 378V379M301.5 378V379M302.5 378V379M303.5 378V379M304.5 378V379M305.5 378V379M306.5 378V379M307.5 378V379M308.5 378V379M309.5 378V379M310.5 227V379M311.5 76V228M312.5 76V77M313.5 76V77M314.5 76V77M315.5 76V77M316.5 76V77M317.5 76V77M318.5 76V77M319.5 76V77M320.5 76V77M321.5 76V77M322.5 76V82M323.5 82V91M324.5 91V100M325.5 100V107M326.5 107V113M327.5 113V117M328.5 117V121M329.5 121V124M330.5 124V126M331.5 126V128M332.5 128V130M333.5 130V131M334.5 131V132M335.5 132V134M336.5 134V135M337.5 135V136M338.5 135V136M339.5 136V137M340.5 136V137M341.5 137V138M342.5 137V139M343.5 139V140M344.5 138V139M345.5 138V139M346.5 139V140M347.5 140V141M348.5 139V140M349.5 140V141M350.5 140V141M351.5 140V142M352.5 142V143M353.5 141V142M354.5 141V142M355.5 142V143M356.5 142V143M357.5 142V143M358.5 143V144M359.5 143V144M360.5 143V144M361.5 143V144M362.5 143V145M363.5 145V146M364.5 144V145M365.5 144V145M366.5 144V145M367.5 145V146M368.5 144V145M369.5 145V146M370.5 144V146M371.5 146V147M372.5 145V146M373.5 146V147M374.5 146V147M375.5 146V147M376.5 146V147M377.5 147V148M378.5 146V147M379.5 146V147M380.5 145V146M381.5 146V147M382.5 147V148M383.5 146V147M384.5 147V148M385.5 147V148M386.5 147V148M387.5 146V267M388.5 266V383M389.5 382V383M390.5 382V383M391.5 382V383M392.5 382V383M393.5 382V383M394.5 382V383M395.5 381V382M396.5 381V382M397.5 382V383M398.5 381V382M399.5 381V382M400.5 381V382M401.5 381V383M402.5 380V381M403.5 381V382M404.5 381V382M405.5 381V382M406.5 381V382M407.5 381V382M408.5 380V381M409.5 380V381M410.5 380V381M411.5 380V381M412.5 379V380M413.5 379V380M414.5 380V381M415.5 380V381M416.5 381V382M417.5 380V381M418.5 380V381M419.5 380V381M420.5 380V381M421.5 380V381M422.5 380V381M423.5 380V381M424.5 380V382M425.5 379V380M426.5 379V380M427.5 379V380M428.5 379V380M429.5 378V379M430.5 379V380M431.5 379V380M432.5 379V380M433.5 379V380M434.5 379V380M435.5 379V380M436.5 379V380M437.5 378V379M438.5 378V379M439.5 379V380M440.5 378V379M441.5 378V379M442.5 378V379M443.5 378V379M444.5 378V379M445.5 378V379M446.5 378V379M447.5 378V379M448.5 378V379M449.5 378V379M450.5 378V379M451.5 378V379M452.5 378V379M453.5 378V379M454.5 378V379M455.5 378V379M456.5 379V380M457.5 378V379M458.5 378V379M459.5 377V378M460.5 377V378M461.5 377V378M462.5 377V378M463.5 377V378M464.5 377V378M465.5 377V378M466.5 378V379M467.5 377V378M468.5 377V378M469.5 377V378M470.5 377V378M471.5 378V379M472.5 377V378M473.5 377V378M474.5 377V378M475.5 377V378M476.5 376V377M477.5 377V378M478.5 377V378M479.5 377V378M480.5 377V378M481.5 377V378M482.5 377V378M483.5 377V378M484.5 377V378M485.5 377V378M486.5 377V378M487.5 377V378M488.5 376V377M489.5 376V377M490.5 376V377M491.5 376V377M492.5 376V377M493.5 376V377M494.5 76V377M495.5 76V77M496.5 76V77M497.5 76V77M498.5 76V77M499.5 76V77M500.5 76V77M501.5 76V77M502.5 76V77M503.5 76V77M504.5 76V77M505.5 76V78M506.5 78V87M507.5 87V96M508.5 96V105M509.5 105V111M510.5 111V116M511.5 116V119M512.5 119V122M513.5 122V125M514.5 125V128M515.5 128V129M516.5 129V131M517.5 131V132M518.5 132V134M519.5 134V135M520.5 135V136M521.5 136V137M522.5 135V136M523.5 136V137M524.5 136V137M525.5 137V138M526.5 137V138M527.5 138V139M528.5 138V139M529.5 139V140M530.5 139V140M531.5 139V140M532.5 139V140M533.5 140V141M534.5 139V140M535.5 140V141M536.5 141V142M537.5 141V142M538.5 141V142M539.5 141V142M540.5 142V143M541.5 143V144M542.5 142V143M543.5 142V143M544.5 142V144M545.5 144V145M546.5 143V144M547.5 143V144M548.5 143V144M549.5 143V144M550.5 143V144M551.5 144V145M552.5 143V145M553.5 145V146M554.5 144V145M555.5 144V145M556.5 145V146M557.5 145V146M558.5 146V147M559.5 145V146M560.5 145V146M561.5 145V146M562.5 145V146M563.5 146V147M564.5 145V146M565.5 146V147M566.5 146V147M567.5 146V147M568.5 147V148M569.5 147V148M570.5 147V267M571.5 266V384M572.5 383V384M573.5 382V383M574.5 382V383M575.5 382V383M576.5 382V383M577.5 382V383M578.5 382V383M579.5 382V383M580.5 382V383M581.5 382V383M582.5 382V383M583.5 381V382M584.5 381V382M585.5 381V382M586.5 381V382M587.5 381V382M588.5 381V382M589.5 381V382M590.5 381V382M591.5 381V382M592.5 381V382M593.5 381V382M594.5 381V382M595.5 380V381M596.5 380V381M597.5 380V381M598.5 380V381M599.5 380V381M600.5 380V381M601.5 380V381M602.5 380V381M603.5 380V381M604.5 380V381M605.5 380V381M606.5 380V381M607.5 380V381M608.5 380V381M609.5 380V381M610.5 380V381M611.5 380V381M612.5 379V380M613.5 379V380M614.5 379V380M615.5 379V380M616.5 380V381M617.5 379V380M618.5 379V380M619.5 379V380M620.5 379V380M621.5 379V380M622.5 380V381M623.5 379V380M624.5 379V380M625.5 379V380M626.5 379V380M627.5 379V380M628.5 379V380M629.5 379V380M630.5 379V380M631.5 379V380M632.5 379V380M633.5 379V380M634.5 379V380M635.5 378V379M636.5 378V379M637.5 378V379M638.5 378V379M639.5 378V379M640.5 378V379M641.5 378V379M642.5 378V379M643.5 378V379M644.5 378V379M645.5 378V379M646.5 378V379M647.5 378V379M648.5 378V379M649.5 378V379M650.5 378V379M651.5 378V379M652.5 378V379M653.5 378V379M654.5 378V379M655.5 378V379M656.5 378V379M657.5 378V379M658.5 378V379M659.5 378V379M660.5 377V378M661.5 378V379M662.5 378V379M663.5 378V379M664.5 378V379M665.5 378V379M666.5 378V379M667.5 378V379M668.5 378V379M669.5 378V379M670.5 379V380M671.5 378V379M672.5 378V379M673.5 378V379M674.5 378V379M675.5 378V379M676.5 378V379M677.5 76V379M678.5 76V77M679.5 76V77M680.5 76V77M681.5 76V77M682.5 76V77M683.5 76V77M684.5 76V77M685.5 76V77M686.5 76V77M687.5 76V77M688.5 76V77M689.5 76V82M690.5 82V91M691.5 91V100M692.5 100V107M693.5 107V113M694.5 113V117M695.5 117V121M696.5 121V124M697.5 124V126M698.5 126V128M699.5 128V131M700.5 131V132M701.5 131V133M702.5 133V134M703.5 133V134M704.5 133V135M705.5 135V136M706.5 136V137M707.5 136V137M708.5 137V138M709.5 136V138M710.5 138V139M711.5 138V139M712.5 138V139M713.5 139V140M714.5 139V140M715.5 140V141M716.5 140V141M717.5 139V141M718.5 141V142M719.5 141V142M720.5 141V142M721.5 142V143M722.5 141V142M723.5 142V143M724.5 143V144M725.5 143V144M726.5 143V144M727.5 144V145M728.5 144V145M729.5 144V145M730.5 145V146M731.5 145V146M732.5 145V146M733.5 146V147M734.5 145V146M735.5 146V147M736.5 146V147M737.5 146V147M738.5 146V147M739.5 146V147M740.5 146V147M741.5 146V147M742.5 146V147M743.5 147V148M744.5 147V148M745.5 148V149M746.5 148V149M747.5 147V148M748.5 148V149M749.5 147V148M750.5 147V148M751.5 148V149M752.5 147V148M753.5 146V147M754.5 146V386M755.5 381V386M756.5 380V381M757.5 380V381M758.5 380V381M759.5 380V381M760.5 380V381M761.5 380V381M762.5 380V381M763.5 380V381M764.5 380V381M765.5 380V381M766.5 380V381M767.5 380V381M768.5 380V381M769.5 380V381M770.5 380V381M771.5 380V381M772.5 380V381M773.5 380V381M774.5 380V381M775.5 380V381M776.5 380V381M777.5 380V381M778.5 380V381M779.5 380V381M780.5 380V381M781.5 380V381M782.5 380V381M783.5 380V381M784.5 381V382M785.5 380V381M786.5 380V381M787.5 379V380M788.5 379V380M789.5 379V380M790.5 379V380M791.5 379V380M792.5 379V380M793.5 379V380M794.5 379V380M795.5 379V380M796.5 379V380M797.5 379V380M798.5 379V380M799.5 379V380M800.5 379V380M801.5 379V380M802.5 379V380M803.5 380V381M804.5 379V380M805.5 379V380M806.5 379V380M807.5 379V380M808.5 379V380M809.5 379V380M810.5 379V380M811.5 378V379M812.5 379V380M813.5 379V380M814.5 379V380M815.5 379V380M816.5 379V380M817.5 379V380M818.5 379V380M819.5 379V380M820.5 378V379M821.5 378V379M822.5 378V379M823.5 379V380M824.5 378V379M825.5 378V379M826.5 378V379M827.5 378V379M828.5 378V379M829.5 378V379M830.5 378V379M831.5 378V379M832.5 378V379M833.5 378V379M834.5 378V379M835.5 378V379M836.5 378V379M837.5 378V379M838.5 378V379M839.5 377V378M840.5 378V379M841.5 378V379M842.5 378V379M843.5 378V379M844.5 378V379M845.5 379V380M846.5 378V379M847.5 378V379M848.5 378V379M849.5 378V379M850.5 378V379M851.5 378V379M852.5 378V379M853.5 378V379M854.5 378V379M855.5 378V379M856.5 378V379M857.5 378V379M858.5 378V379M859.5 378V379M860.5 227V379M861.5 76V228M862.5 76V77M863.5 76V77M864.5 76V77M865.5 76V77M866.5 76V77M867.5 76V77M868.5 76V77M869.5 76V77M870.5 76V77M871.5 76V77M872.5 76V81M873.5 81V90M874.5 90V99M875.5 99V107M876.5 107V112M877.5 112V117M878.5 117V120M879.5 120V123M880.5 123V126M881.5 126V128M882.5 128V129M883.5 129V131M884.5 131V133M885.5 133V134M886.5 132V134M887.5 134V135M888.5 135V137M889.5 136V138M890.5 135V137M891.5 137V138M892.5 137V138M893.5 138V139M894.5 138V139M895.5 139V140M896.5 139V140M897.5 139V140M898.5 139V140M899.5 140V141M900.5 140V141M901.5 140V142M902.5 142V143M903.5 141V142M904.5 141V142M905.5 142V143M906.5 142V143M907.5 142V143M908.5 142V143M909.5 143V144M910.5 143V144M911.5 143V144M912.5 143V144M913.5 143V145M914.5 144V146M915.5 143V144M916.5 143V144M917.5 143V145M918.5 145V146M919.5 146V147M920.5 145V146M921.5 145V146M922.5 145V146M923.5 145V146M924.5 145V146M925.5 144V146M926.5 146V147M927.5 146V147M928.5 146V147M929.5 146V147M930.5 146V147M931.5 146V147M932.5 145V146M933.5 145V146M934.5 146V147M935.5 146V147M936.5 146V147M937.5 146V386M388.5 266V387M571.5 266V387M766.5 381V387" stroke="#00ffff" stroke-width="1" fill="none"/>
</svg>
<svg class="ov" width="958" height="712" viewBox="0 0 958 712" shape-rendering="crispEdges">
<path d="M415 18.5h1M416 17.5h1M417 16.5h1M418 15.5h1M419 15.5h1M420 16.5h1M421 17.5h1M422 18.5h1M423 19.5h1M424 19.5h1M425 18.5h1M426 17.5h1M427 16.5h1M428 15.5h1M429 15.5h1M430 16.5h1M431 17.5h1M432 18.5h1M433 19.5h1M434 19.5h1M435 18.5h1M436 17.5h1M437 16.5h1M438 15.5h1M439 15.5h1M440 16.5h1M441 17.5h1M442 18.5h1M443 19.5h1M444 19.5h1M445 18.5h1M446 17.5h1M447 16.5h1M448 15.5h1M449 15.5h1M450 16.5h1M451 17.5h1M452 18.5h1M453 19.5h1M454 19.5h1M455 18.5h1M456 17.5h1M457 16.5h1M458 15.5h1M459 15.5h1M460 16.5h1M461 17.5h1M462 18.5h1M463 19.5h1M464 19.5h1M465 18.5h1M466 17.5h1M467 16.5h1M468 15.5h1M469 15.5h1M470 16.5h1M471 17.5h1M472 18.5h1M473 19.5h1M474 19.5h1M475 18.5h1M476 17.5h1M477 16.5h1M478 15.5h1M479 15.5h1M480 16.5h1M481 17.5h1M482 18.5h1M483 19.5h1M484 19.5h1M485 18.5h1M486 17.5h1M487 16.5h1M488 15.5h1M489 15.5h1M490 16.5h1M491 17.5h1M492 18.5h1M493 19.5h1M494 19.5h1M495 18.5h1M496 17.5h1M497 16.5h1M498 15.5h1M499 15.5h1M500 16.5h1M501 17.5h1M502 18.5h1M503 19.5h1M504 19.5h1M505 18.5h1M506 17.5h1M507 16.5h1M508 15.5h1M509 15.5h1M510 16.5h1M511 17.5h1M512 18.5h1M513 19.5h1M514 19.5h1M515 18.5h1M516 17.5h1M517 16.5h1M518 15.5h1M519 15.5h1M520 16.5h1M521 17.5h1M522 18.5h1M523 19.5h1M524 19.5h1M525 18.5h1M526 17.5h1M527 16.5h1M528 15.5h1M529 15.5h1M530 16.5h1M531 17.5h1M532 18.5h1M533 19.5h1M534 19.5h1M535 18.5h1M536 17.5h1M537 16.5h1M538 15.5h1M539 15.5h1M540 16.5h1M541 17.5h1M542 18.5h1" stroke="#00f000" stroke-width="1" fill="none"/>
<path d="M414 10.5H416M414.5 10V24M414 23.5H416" stroke="#00ffff" fill="none"/>
<path d="M542 10.5H544M543.5 10V24M542 23.5H544" stroke="#00ffff" fill="none"/>
<polygon points="21,37.5 26,32 38,32 38,43 26,43" fill="#ff8000" shape-rendering="auto"/>
<polygon points="939.5,593.5 945,588 957,588 957,599 945,599" fill="#ffff00" shape-rendering="auto"/>
<polygon points="3,645 15,645 20.3,650.5 15,656 3,656" fill="#ffff00" shape-rendering="auto"/>
<polygon points="3,376 15,376 20.3,381.5 15,387 3,387" fill="#00ffff" shape-rendering="auto"/>
<path d="M860 22.5H866M865.5 23V6M865 6.5H870" stroke="#ffff00" fill="none"/>
<path d="M865 12.5h1M864 13.5h3M863 14.5h5M862 15.5h7" stroke="#ffff00" fill="none"/>
<path d="M52 703.5H62M52 699.5h1M55 699.5h1M58 699.5h1M61 699.5h1" stroke="#ffff00" fill="none"/>
<path d="M162 703.5H172M162 699.5h1M165 699.5h1M168 699.5h1M171 699.5h1" stroke="#00ffff" fill="none"/>
</svg>
<svg class="ov" width="958" height="712" viewBox="0 0 958 712" font-family="Liberation Sans, sans-serif" font-size="12px">
<g filter="url(#crisp)">
<text x="10.80 18.26 22.26 25.56 32.46 34.08" y="19" fill="#00ff00">Trig'D</text>
<text x="738.80 746.26 749.26 760.56 766.96 771.58 777.96 781.60 788.60 795.60 802.26 813.72" y="20" fill="#ff8000">Time:5.000ms</text>
<text x="876.46 885.08 893.90" y="20" fill="#000000">CH1</text>
<text x="915.60 921.96 925.46 932.60 939.00" y="20" fill="#ffff00">3.60V</text>
<text x="24.46 33.08 41.90" y="705" fill="#ffff00">CH1</text>
<text x="71.58 77.96 81.60 88.60 95.00" y="705" fill="#ffff00">5.00V</text>
<text x="134.46 143.08 152.46" y="705" fill="#000000">CH2</text>
<text x="181.58 187.96 191.60 198.60 205.00" y="705" fill="#00ffff">5.00V</text>
<text x="5.16" y="656" fill="#000000" font-weight="bold" transform="scale(1.348,1)">1</text>
<text x="7.33" y="387" fill="#000000" font-weight="bold" transform="scale(1.04,1)">2</text>
</g>
<g shape-rendering="crispEdges" fill="none"><path d="M894.5 19.5H897M898.3 19.5H901" stroke="#ffff00"/><path d="M42.5 704.5H45M46.3 704.5H49" stroke="#000"/><path d="M7.5 655.5H11M13 655.5H15.4" stroke="#ffff00"/></g>
</svg>
<div class="t" style="left:28px;top:31px;width:7px;text-align:center;color:#000;font-size:11px;letter-spacing:0;transform:scaleX(0.84);">T</div>
<div class="t" style="left:947px;top:587px;width:7px;text-align:center;color:#000;font-size:11px;letter-spacing:0;transform:scaleX(0.84);">T</div>
<div class="t" style="left:411.6px;top:1px;width:7px;text-align:center;color:#ff8000;font-size:7px;font-weight:bold;letter-spacing:0;transform:scaleX(1.2);">T</div>
</body></html>
